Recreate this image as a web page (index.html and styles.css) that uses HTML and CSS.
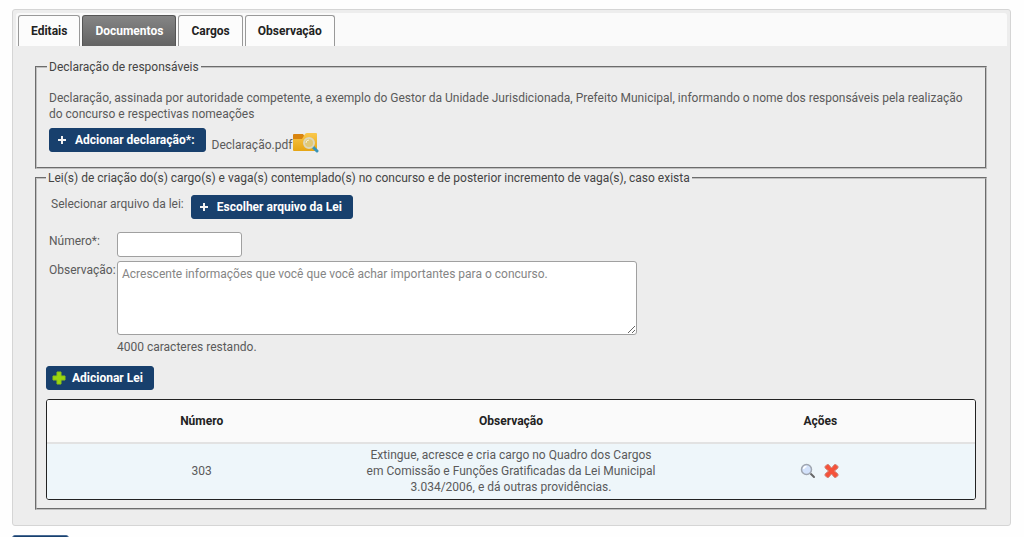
FILE: index.html
```html
<!DOCTYPE html>
<html lang="pt-BR">
<head>
    <meta charset="utf-8">
    <title>Documentos do Concurso</title>
    <link rel="stylesheet" href="styles.css">
</head>
<body>
    <div class="panel">
        <nav class="tabs">
            <a class="tab" href="#editais">Editais</a>
            <a class="tab active" href="#documentos">Documentos</a>
            <a class="tab" href="#cargos">Cargos</a>
            <a class="tab" href="#observacao">Observação</a>
        </nav>
        <div class="content">
            <fieldset class="declaracao">
                <legend>Declaração de responsáveis</legend>
                <p>Declaração, assinada por autoridade competente, a exemplo do Gestor da Unidade Jurisdicionada, Prefeito Municipal, informando o nome dos responsáveis pela realização do concurso e respectivas nomeações</p>
                <div class="file-row">
                    <button type="button" class="btn">
                        <svg class="icon-plus" width="10" height="10" viewBox="0 0 10 10"><path d="M4 1h2v3h3v2H6v3H4V6H1V4h3z" fill="#f2f2f2"/></svg>
                        Adcionar declaração*:
                    </button>
                    <span class="file-name">Declaração.pdf</span>
                    <a href="#declaracao" aria-label="Visualizar declaração">
                        <svg class="icon-folder" width="27" height="22" viewBox="0 0 27 22">
                            <defs>
                                <linearGradient id="folder" x1="0" y1="0" x2="0" y2="1">
                                    <stop offset="0" stop-color="#fac84c"/>
                                    <stop offset="1" stop-color="#e6a514"/>
                                </linearGradient>
                            </defs>
                            <path d="M1 3q0-1 1-1h9l2 3v4H1z" fill="#d9840f"/>
                            <path d="M1 7h9l3-5q1-1 2-1h9q1 0 1 1v16q0 1-1 1H2q-1 0-1-1z" fill="url(#folder)"/>
                            <path d="M21 15l4 4" stroke="#3794b8" stroke-width="3" stroke-linecap="round"/>
                            <circle cx="17" cy="11" r="5" fill="#e0c878" stroke="#dcd6bc" stroke-width="2"/>
                            <path d="M14 11q0-3 3-3" stroke="#f8f0d0" stroke-width="1" fill="none"/>
                        </svg>
                    </a>
                </div>
            </fieldset>

            <fieldset class="leis">
                <legend>Lei(s) de criação do(s) cargo(s) e vaga(s) contemplado(s) no concurso e de posterior incremento de vaga(s), caso exista</legend>
                <div class="select-row">
                    <label for="arquivoLei">Selecionar arquivo da lei:</label>
                    <button type="button" class="btn" id="arquivoLei">
                        <svg class="icon-plus" width="10" height="10" viewBox="0 0 10 10"><path d="M4 1h2v3h3v2H6v3H4V6H1V4h3z" fill="#f2f2f2"/></svg>
                        Escolher arquivo da Lei
                    </button>
                </div>
                <div class="form">
                    <label for="numero">Número*:</label>
                    <input type="text" id="numero">
                    <label for="obs">Observação:</label>
                    <div>
                        <textarea id="obs" placeholder="Acrescente informações que você que você achar importantes para o concurso."></textarea>
                        <div class="counter">4000 caracteres restando.</div>
                    </div>
                </div>
                <button type="button" class="btn btn-add">
                    <svg width="14" height="14" viewBox="0 0 14 14"><path d="M5 1h4v4h4v4H9v4H5V9H1V5h4z" fill="#9bd60f" stroke="#8cc414"/></svg>
                    Adicionar Lei
                </button>
                <div class="table-box">
                    <table>
                        <thead>
                            <tr>
                                <th>Número</th>
                                <th>Observação</th>
                                <th>Ações</th>
                            </tr>
                        </thead>
                        <tbody>
                            <tr>
                                <td>303</td>
                                <td>Extingue, acresce e cria cargo no Quadro dos Cargos em Comissão e Funções Gratificadas da Lei Municipal 3.034/2006, e dá outras providências.</td>
                                <td>
                                    <div class="actions">
                                        <a href="#ver" aria-label="Visualizar">
                                            <svg width="16" height="16" viewBox="0 0 16 16">
                                                <path d="M11 11l3 3" stroke="#666" stroke-width="2" stroke-linecap="round"/>
                                                <circle cx="6.500" cy="6.500" r="5" fill="#d3e2fb" stroke="#a0a6b0" stroke-width="1.500"/>
                                                <path d="M3.500 6q.5-2.500 3-2.500" stroke="#fff" stroke-width="1.500" fill="none"/>
                                            </svg>
                                        </a>
                                        <a href="#excluir" aria-label="Excluir">
                                            <svg width="16" height="16" viewBox="0 0 16 16">
                                                <path d="M3 1.500l1.500 0 3 3.500 3-3.500 1.500 0 2 2 0 1.500-3.500 3 3.500 3 0 1.500-2 2-1.500 0-3-3.500-3 3.500-1.500 0-2-2 0-1.500 3.500-3-3.500-3 0-1.500z" fill="#f5523a" stroke="#d08a7e" stroke-linejoin="round"/>
                                            </svg>
                                        </a>
                                    </div>
                                </td>
                            </tr>
                        </tbody>
                    </table>
                </div>
            </fieldset>
        </div>
    </div>
    <button type="button" class="btn btn-footer" aria-label="Salvar"></button>
</body>
</html>
```
FILE: styles.css
```css
* {
    box-sizing: border-box;
}
html {
    overflow: hidden;
}
body {
    margin: 9px 13px 0 12px;
    background-color: #fefefe;
    color: #5a5a5a;
    font-family: Roboto, "Noto Sans", sans-serif;
    font-size: 12px;
    line-height: 16px;
}
.panel {
    padding: 3px;
    background-color: #ededed;
    border: 1px solid #d5d5d5;
    border-radius: 3px;
}
.tabs {
    display: flex;
    gap: 2px;
    padding: 2px 2px 0;
    background-color: #fafafa;
    border-radius: 3px 3px 0 0;
}
.tab {
    padding: 7px 12px;
    height: 31px;
    background-color: #fcfcfc;
    border: 1px solid #999;
    border-bottom: none;
    border-radius: 3px 3px 0 0;
    color: #222;
    font-weight: bold;
    text-decoration: none;
}
.tab.active {
    background: linear-gradient(#858585, #636363);
    border-color: #555;
    color: #fff;
}
.content {
    padding: 13px 20px 12px 19px;
}
fieldset {
    min-width: 0;
    margin: 0;
    border: 2px groove #c0c0c0;
}
legend {
    padding: 0 2px;
    color: #444;
}
.declaracao {
    padding: 15px 12px 13px;
    margin-bottom: 1px;
}
.leis {
    padding: 9px 9px 8px;
}
.declaracao legend {
    margin-left: -2px;
}
p {
    margin: 0 0 6px;
}
.file-row {
    display: flex;
    align-items: flex-start;
}
.file-name {
    margin: 9px 0 0 6px;
}
.icon-folder {
    display: block;
    margin-top: 4px;
}
.btn {
    display: inline-flex;
    align-items: center;
    gap: 8px;
    height: 24px;
    padding: 0 10px 0 7px;
    background-color: #18406d;
    border: 1px solid #18406d;
    border-radius: 3px;
    color: #fff;
    font: bold 12px Roboto, "Noto Sans", sans-serif;
    white-space: nowrap;
    cursor: pointer;
}
.btn:hover {
    background-color: #245488;
}
.select-row {
    display: flex;
    align-items: flex-start;
    gap: 7px;
    padding-left: 5px;
    margin-bottom: 13px;
}
.select-row label, .form label {
    padding-top: 1px;
}
.form {
    display: grid;
    grid-template-columns: 68px 1fr;
    row-gap: 4px;
    padding-left: 3px;
    white-space: nowrap;
}
input, textarea {
    display: block;
    padding: 4px;
    background-color: #fff;
    border: 1px solid #a0a0a0;
    border-radius: 3px;
    color: #555;
    font: 12px/16px Roboto, "Noto Sans", sans-serif;
}
input {
    width: 125px;
    height: 25px;
}
textarea {
    width: 520px;
    max-width: 100%;
    height: 74px;
    resize: both;
}
textarea::placeholder {
    color: #858585;
}
.counter {
    margin-top: 4px;
}
.btn-add {
    margin: 11px 0 9px;
    padding: 0 10px 0 5px;
    gap: 6px;
}
.table-box {
    border: 1px solid #222;
    border-radius: 3px;
    overflow: hidden;
}
table {
    width: 100%;
    table-layout: fixed;
    border-collapse: collapse;
    text-align: center;
}
th {
    height: 43px;
    padding: 0;
    background-color: #fafafa;
    border-bottom: 2px solid #e2e2e2;
    color: #222;
}
td {
    padding: 3px 10px 4px;
    background-color: #eef6fa;
}
.actions {
    display: flex;
    justify-content: center;
    gap: 8px;
}
.actions svg {
    display: block;
}
.btn-footer {
    display: block;
    width: 57px;
    margin-top: 9px;
    border-color: #4a6c96;
}
```
